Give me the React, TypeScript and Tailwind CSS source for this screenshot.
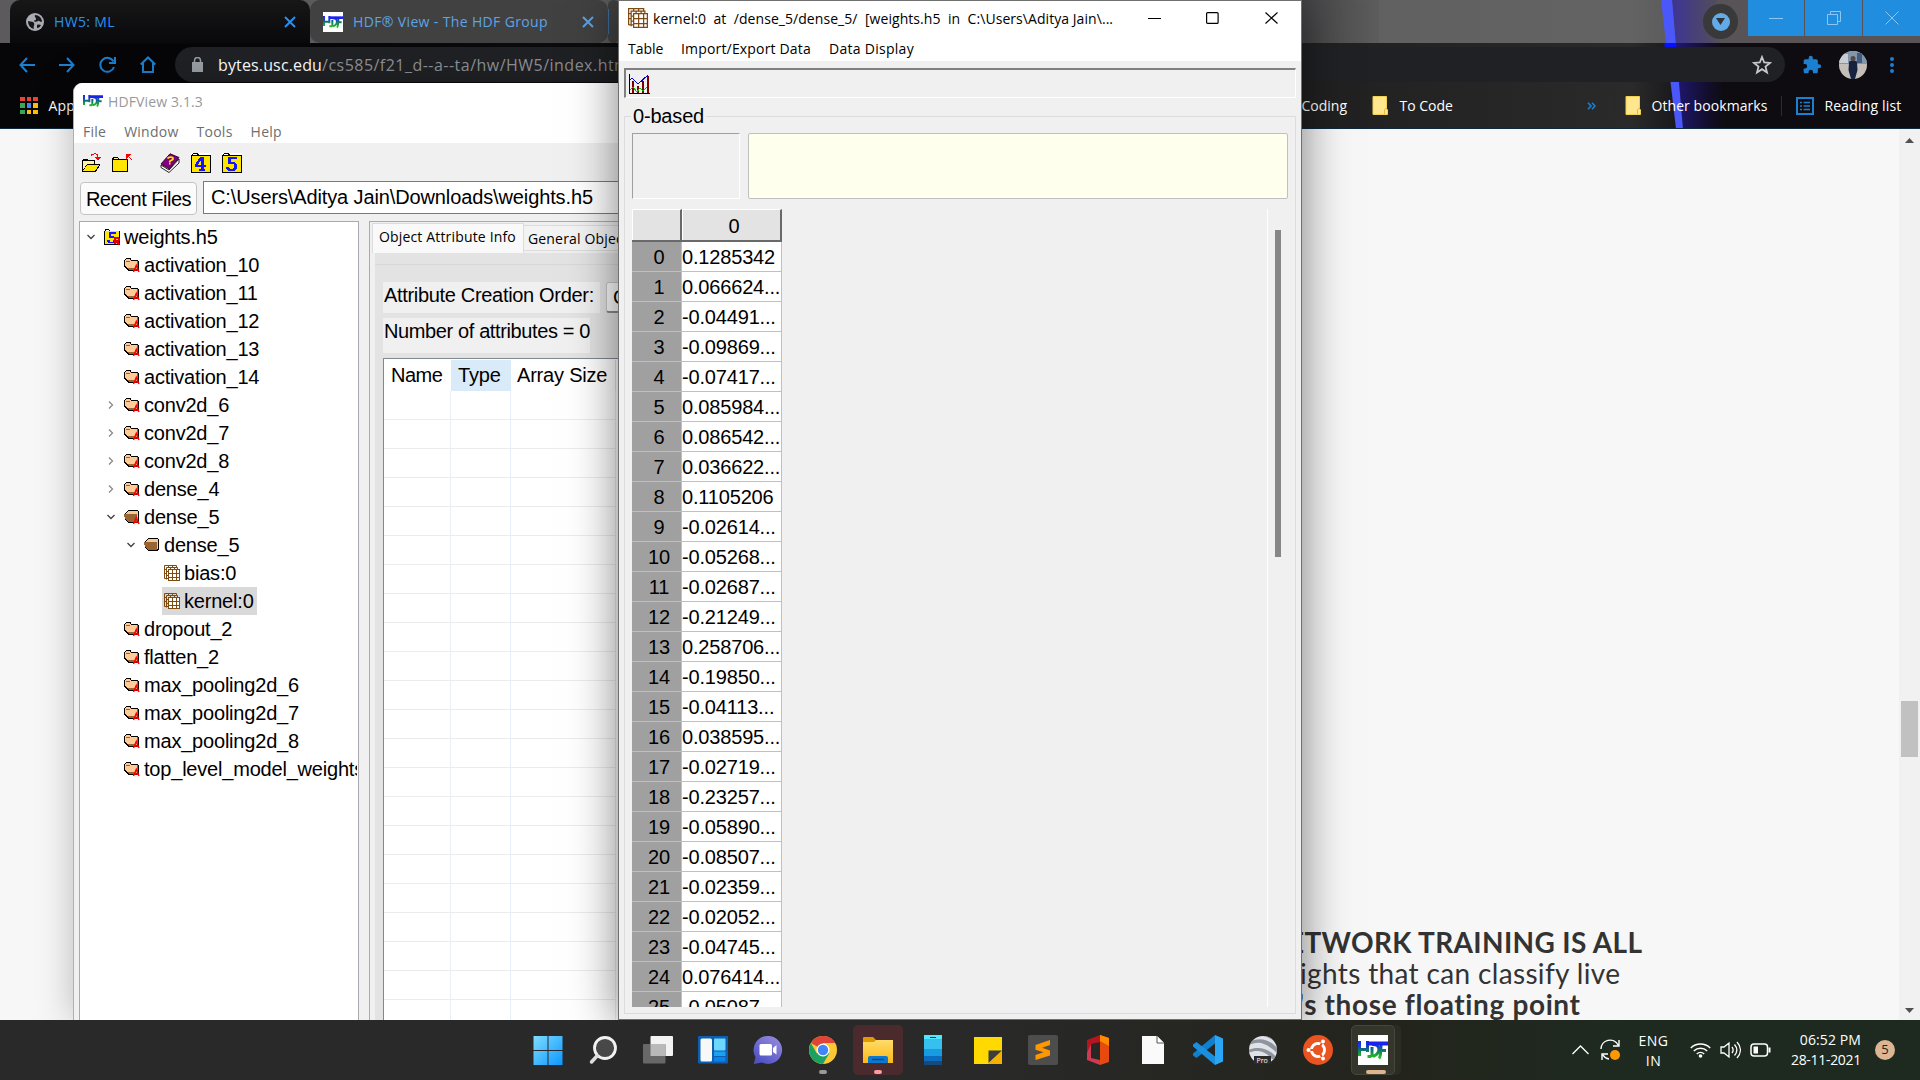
import type { ReactNode } from "react";

const tableRows = [
  "0.1285342", "0.066624...", "-0.04491...", "-0.09869...", "-0.07417...", "0.085984...", "0.086542...",
  "0.036622...", "0.1105206", "-0.02614...", "-0.05268...", "-0.02687...", "-0.21249...", "0.258706...",
  "-0.19850...", "-0.04113...", "0.038595...", "-0.02719...", "-0.23257...", "-0.05890...", "-0.08507...",
  "-0.02359...", "-0.02052...", "-0.04745...", "0.076414...", "-0.05087...",
];

type TreeKind = "file" | "closed" | "openA" | "open" | "data";
type TreeItem = { label: string; kind: TreeKind; level: number; arrow?: "open" | "shut"; selected?: boolean };

const tree: TreeItem[] = [
  { label: "weights.h5", kind: "file", level: 0, arrow: "open" },
  { label: "activation_10", kind: "closed", level: 1 },
  { label: "activation_11", kind: "closed", level: 1 },
  { label: "activation_12", kind: "closed", level: 1 },
  { label: "activation_13", kind: "closed", level: 1 },
  { label: "activation_14", kind: "closed", level: 1 },
  { label: "conv2d_6", kind: "closed", level: 1, arrow: "shut" },
  { label: "conv2d_7", kind: "closed", level: 1, arrow: "shut" },
  { label: "conv2d_8", kind: "closed", level: 1, arrow: "shut" },
  { label: "dense_4", kind: "closed", level: 1, arrow: "shut" },
  { label: "dense_5", kind: "openA", level: 1, arrow: "open" },
  { label: "dense_5", kind: "open", level: 2, arrow: "open" },
  { label: "bias:0", kind: "data", level: 3 },
  { label: "kernel:0", kind: "data", level: 3, selected: true },
  { label: "dropout_2", kind: "closed", level: 1 },
  { label: "flatten_2", kind: "closed", level: 1 },
  { label: "max_pooling2d_6", kind: "closed", level: 1 },
  { label: "max_pooling2d_7", kind: "closed", level: 1 },
  { label: "max_pooling2d_8", kind: "closed", level: 1 },
  { label: "top_level_model_weights", kind: "closed", level: 1 },
];

const indents = ["pl-[2px]", "pl-[22px]", "pl-[42px]", "pl-[62px]"];

/* ---------- icons ---------- */

function HdfLogo({ size }: { size: number }) {
  return (
    <svg width={size} height={size} viewBox="0 0 30 30" className="shrink-0">
      <defs>
        <linearGradient id="hdfg" gradientUnits="userSpaceOnUse" x1="0" y1="6" x2="0" y2="24">
          <stop offset="0" stopColor="#1a22ff" />
          <stop offset="0.3" stopColor="#1544c0" />
          <stop offset="0.6" stopColor="#128a50" />
          <stop offset="1" stopColor="#2ec81e" />
        </linearGradient>
      </defs>
      <rect width="30" height="30" fill="#fff" />
      <g stroke="url(#hdfg)" fill="none" strokeWidth="3">
        <path d="M1.500 6v15M1.500 14.500h8M9.500 6v11" />
        <path d="M9.500 21.500h4M14 12v10M14 9.500c9-1 9 9 1 12" />
        <path d="M21 23.500c2-2 2-9 2-14M22 15.500h6" />
      </g>
      <path d="M9 6.500h21v4H9z" fill="#1a22ee" />
    </svg>
  );
}

function FolderClosed({ open, mark }: { open?: boolean; mark?: boolean }) {
  return (
    <svg width="16" height="16" viewBox="0 0 16 16" className="shrink-0">
      {open ? (
        <g shapeRendering="crispEdges">
          <path d="M2 3 4 1h9l2 1v10l-2 2H4L1 11V5z" fill="#000" />
          <path d="M2 4 4 2h10v3H1z" fill="#f5c999" />
          <path d="M0 5h13v7l-1 1H4L1 10z" fill="#996633" />
          <path d="M13 4h1v8h-1z" fill="#f5c999" />
        </g>
      ) : (
        <g shapeRendering="crispEdges">
          <path d="M1 2 2 1h4l1 1v1h6l2 2v7l-2 2H5L2 12 0 9V4z" fill="#000" />
          <path d="M1 4 2 2h4l1 2h6v8H5L1 9z" fill="#ffcc99" />
          <path d="M13 4h1v8h-1zM4 11h8v2H5z" fill="#996633" />
          <path d="M2 4h4v1H2z" fill="#996633" />
        </g>
      )}
      {mark && <path d="M9.500 15 12.300 8.500 15 15M10.500 13h3.500" fill="none" stroke="#f00" strokeWidth="1.500" />}
    </svg>
  );
}

function GridStack({ size }: { size: number }) {
  return (
    <svg width={size} height={size} viewBox="0 0 16 16" className="shrink-0" fill="none" stroke="#7d4a12" strokeWidth="1">
      <path d="M.5 13.500V.5h12v2M.5 4.500h2M.5 8.500h2M4.500.5v2M8.500.5v2M.5 13.500h4" />
      <path d="M2.500 14.500v-12h11v2M2.500 6.500h2M2.500 10.500h2M6.500 2.500v2M10.500 2.500v2" />
      <rect x="4.500" y="4.500" width="11" height="11" fill="#fff" />
      <path d="M4.500 8.500h11M4.500 12.500h11M8.500 4.500v11M12.500 4.500v11" />
    </svg>
  );
}

function NumberFolder({ digit, size, mark }: { digit: "4" | "5"; size: number; mark?: boolean }) {
  return (
    <svg width={size} height={size} viewBox="0 0 20 20" className="shrink-0" shapeRendering="crispEdges">
      <path d="M0 0h20v20H0z" fill="#fff" />
      <path d="M1 3V1l1-1h4l2 2h12v18H0V2z" fill="#000" />
      <path d="M2 1h4v1H2zM8 0h12v2H8z" fill="#fff" />
      <path d="M1 3h18v16H1z" fill="#ffe600" />
      {digit === "4" ? (
        <path d="M9 4h4v8h2v2h-2v2h1v2H8v-2h2v-2H4v-2l3-5zM10 7l-3 5h3z" fill="#1414ff" fillRule="evenodd" />
      ) : (
        <path d="M6 4h9v2H9v3h3l3 2v4l-3 3H7l-3-2v-2h3l1 2h3l1-2v-2l-1-1H6z" fill="#1414ff" />
      )}
      {mark && <path d="M14 19v-8h4l1 2-1 2h-3l4 4" fill="none" stroke="#e00000" strokeWidth="2" />}
    </svg>
  );
}

function TreeArrow({ kind }: { kind?: "open" | "shut" }) {
  return (
    <span className="flex w-[17px] shrink-0 justify-center">
      {kind === "open" && (
        <svg width="8" height="6" viewBox="0 0 8 6" fill="none" stroke="#404040" strokeWidth="1.300"><path d="m.5 1 3.500 3.500L7.500 1" /></svg>
      )}
      {kind === "shut" && (
        <svg width="6" height="8" viewBox="0 0 6 8" fill="none" stroke="#8a8a8a" strokeWidth="1.300"><path d="m1 .5 3.500 3.500L1 7.500" /></svg>
      )}
    </span>
  );
}

function YellowFolder() {
  return (
    <svg width="16" height="19" viewBox="0 0 16 19" className="shrink-0">
      <path d="M1 .5h13.500v12l1 1.500v4.500H1z" fill="#ffe68f" stroke="#f3d04e" />
      <path d="M12.500 18v-4l1-1.500h1" fill="none" stroke="#e8b93a" />
    </svg>
  );
}

/* ---------- browser ---------- */

function Tab({ active, icon, children }: { active?: boolean; icon: ReactNode; children: ReactNode }) {
  return (
    <div
      className={
        active
          ? "flex h-full w-[300px] items-center rounded-t-[10px] bg-[#0a090b] bg-linear-to-b from-[#171718] to-[#09080a] pr-[14px] pl-[16px] text-[#2790f5]"
          : "flex h-full w-[298px] items-center rounded-[10px] bg-[#414141] pr-[14px] pl-[13px] text-[#5ea3e4]"
      }
    >
      {icon}
      <span className="ml-[10px] flex-1 pb-px text-[14px] tracking-[0.36px] whitespace-nowrap">{children}</span>
      <svg width="12" height="12" viewBox="0 0 12 12" fill="none" stroke="currentColor" strokeWidth="2"><path d="m1 1 10 10M11 1 1 11" /></svg>
    </div>
  );
}

function Browser() {
  return (
    <div className="flex h-[1020px] flex-col bg-[#f7f7f7]">
      <header className="relative flex h-[129px] shrink-0 flex-col overflow-hidden border-b border-[#0b2a40] bg-linear-to-r from-[#060507] from-15% via-[#2a2a2a] via-85% to-[#0e0c10] to-89%">
        <div className="flex h-[43px] shrink-0 justify-between bg-linear-to-r from-[#5c5a5c] from-30% via-[#636363] via-85% to-[#575357] to-89%">
          <div className="flex pl-[10px]">
            <Tab
              active
              icon={
                <svg width="18" height="18" viewBox="0 0 18 18">
                  <circle cx="9" cy="9" r="9" fill="#a9adb3" />
                  <path d="M2 8c3 1 5 0 6 2s-1 3 0 6c-4-1-6-4-6-8zM9 2c-1 2 1 2 1 4s-2 1-2 2 3 1 4 0 2 1 4 1c0-4-3-7-7-7zM11 12c2-1 3 0 4 0-1 2-2 3-4 3z" fill="#17171a" />
                </svg>
              }
            >
              HW5: ML
            </Tab>
            <Tab icon={<HdfLogo size={20} />}>HDF® View - The HDF Group</Tab>
            <div className="h-full w-[11px] rounded-[8px] bg-[#414141] py-[9px]"><div className="h-full w-px bg-[#3d6d9c]" /></div>
            <div className="h-full w-[760px] bg-linear-to-r from-[#454547] from-90% to-[#5d5d5d]" />
          </div>
        </div>
        <svg className="absolute top-0 left-[1600px]" width="160" height="129" viewBox="0 0 160 129">
          <defs>
            <linearGradient id="glow" x1="0" x2="1">
              <stop offset="0" stopColor="#2414c8" stopOpacity=".55" />
              <stop offset="1" stopColor="#2414a0" stopOpacity="0" />
            </linearGradient>
          </defs>
          <path d="M72 0h45l8 129H83z" fill="url(#glow)" />
          <path d="M61 0h11l11 129h-7z" fill="#4a57fa" />
          <path d="M64 43h12l.5 5H65z" fill="#0612ff" />
        </svg>
        <div className="absolute top-0 right-0 flex items-start text-[#8cc6f5]">
          <div className="mt-[4px] mr-[10px] flex size-[35px] items-center justify-center rounded-full bg-[#393939]">
            <div className="flex size-[18px] items-center justify-center rounded-full bg-[#62abe8]">
              <svg width="9" height="7" viewBox="0 0 9 7"><path d="M0 0h9L4.500 7z" fill="#333" /></svg>
            </div>
          </div>
          <div className="flex h-[36px] gap-px">
            <div className="flex w-[56px] items-center justify-center bg-[#208ddf]">
              <svg width="14" height="14" stroke="currentColor"><path d="M0 7.500h14" /></svg>
            </div>
            <div className="flex w-[57px] items-center justify-center bg-[#208ddf]">
              <svg width="14" height="14" fill="none" stroke="currentColor"><path d="M.5 3.500h10v10H.5zM3.500 3V.5h10v10H11" /></svg>
            </div>
            <div className="flex w-[57px] items-center justify-center bg-[#208ddf]">
              <svg width="14" height="14" fill="none" stroke="currentColor"><path d="m.5.5 13 13M13.500.5l-13 13" /></svg>
            </div>
          </div>
        </div>
        <div className="relative flex h-[43px] shrink-0 items-center pl-[19px] text-[#1b80d0]">
          <div className="flex w-[155px] items-center gap-[24px]">
            <svg width="16" height="16" viewBox="0 0 16 16" fill="none" stroke="currentColor" strokeWidth="2"><path d="M16 8H2M8 1 1.500 8 8 15" /></svg>
            <svg width="16" height="16" viewBox="0 0 16 16" fill="none" stroke="currentColor" strokeWidth="2"><path d="M0 8h14M8 1l6.500 7L8 15" /></svg>
            <svg width="17" height="17" viewBox="0 0 17 17" fill="none" stroke="currentColor" strokeWidth="2"><path d="M15 11a7 7 0 1 1-.5-5.500M16 1v6h-6" /></svg>
            <svg width="16" height="17" viewBox="0 0 16 17" fill="none" stroke="currentColor" strokeWidth="2"><path d="M3 7v9h10V7M.7 8.500 8 1.500l7.300 7" /></svg>
          </div>
          <div className="ml-px flex h-[35px] w-[1610px] items-center rounded-full bg-[#202124] pr-[13px] pl-[17px]">
            <svg width="11" height="15" viewBox="0 0 11 15"><path d="M0 5h11v10H0z" fill="#9aa0a6" /><path d="M2.500 5V3.500a3 3 0 0 1 6 0V5" fill="none" stroke="#9aa0a6" strokeWidth="1.500" /></svg>
            <div className="ml-[15px] flex-1 pt-px text-[16px] whitespace-nowrap">
              <span className="tracking-[0.14px] text-white">bytes.usc.edu</span>
              <span className="tracking-[0.48px] text-[#8e9196]">/cs585/f21_d--a--ta/hw/HW5/index.html</span>
            </div>
            <svg width="20" height="20" viewBox="0 0 20 20" fill="none" stroke="#c6c8ca" strokeWidth="1.800"><path d="m10 2 2.200 5.500 5.800.4-4.500 3.700 1.500 5.900-5-3.300-5 3.300 1.500-5.900L2 7.900l5.800-.4z" /></svg>
          </div>
          <svg className="ml-[17px]" width="20" height="20" viewBox="0 0 24 24" fill="#1b80d0"><path d="M20.500 11H19V7c0-1.100-.9-2-2-2h-4V3.500a2.500 2.500 0 0 0-5 0V5H4c-1.100 0-2 .9-2 2v3.800h1.500a2.700 2.700 0 0 1 0 5.400H2V20c0 1.100.9 2 2 2h3.800v-1.500a2.700 2.700 0 0 1 5.400 0V22H17c1.100 0 2-.9 2-2v-4h1.500a2.500 2.500 0 0 0 0-5z" /></svg>
          <svg className="ml-[17px]" width="28" height="28" viewBox="0 0 28 28">
            <defs><clipPath id="av"><circle cx="14" cy="14" r="14" /></clipPath></defs>
            <g clipPath="url(#av)">
              <rect width="28" height="28" fill="#c3bfb8" />
              <rect width="28" height="13" fill="#7f96ad" />
              <path d="M0 3h9v9H0z" fill="#c9ccd0" /><path d="M18 2h5v10h-5z" fill="#3f5c80" />
              <path d="M10 11c1-2 7-2 8 0l.5 8-2.500 9h-4l-2.500-9z" fill="#152341" />
              <circle cx="14" cy="7.500" r="2.500" fill="#5b4640" />
            </g>
          </svg>
          <svg className="ml-[23px]" width="4" height="18" viewBox="0 0 4 18" fill="#1b80d0"><circle cx="2" cy="3" r="2" /><circle cx="2" cy="9" r="2" /><circle cx="2" cy="15" r="2" /></svg>
        </div>
        <div className="relative flex flex-1 items-center pb-[3px] pl-[20px] text-[14px] text-white">
          <div className="mr-[11px] grid grid-cols-3 gap-[2px]">
            {["bg-[#ea4335]", "bg-[#ea4335]", "bg-[#ea4335]", "bg-[#34a853]", "bg-[#4285f4]", "bg-[#fbbc05]", "bg-[#34a853]", "bg-[#fbbc05]", "bg-[#fbbc05]"].map((c, i) => (
              <i key={i} className={`size-[4.500px] ${c}`} />
            ))}
          </div>
          <span className="w-[1253px] tracking-[0.2px]">Apps</span>
          <span className="w-[70px]">Coding</span>
          <YellowFolder />
          <span className="ml-[12px] w-[187px]">To Code</span>
          <svg width="9" height="8" viewBox="0 0 9 8" fill="none" stroke="#1b80d0" strokeWidth="1.600"><path d="m1 .8 3 3.200-3 3.200M5 .8 8 4 5 7.200" /></svg>
          <i className="ml-[13px] h-[20px] w-px bg-[#14324d]" />
          <span className="ml-[15px]"><YellowFolder /></span>
          <span className="ml-[11px] w-[129px] tracking-[0.07px]">Other bookmarks</span>
          <i className="h-[20px] w-px bg-[#14324d]" />
          <svg className="ml-[14px]" width="18" height="18" viewBox="0 0 18 18" fill="none" stroke="#1b80d0"><rect x="1" y="1" width="16" height="16" strokeWidth="2" /><path d="M4 5.500h2M4 9h2M4 12.500h2M7.500 5.500H14M7.500 9H14M7.500 12.500H14" strokeWidth="1.500" /></svg>
          <span className="ml-[11px] tracking-[0.17px]">Reading list</span>
        </div>
      </header>
      <div className="flex flex-1 justify-end">
        <main className="flex w-[598px] flex-col justify-end overflow-hidden font-[Lato] text-[28px] leading-[31px] whitespace-nowrap text-[#333]">
          <p className="-ml-[13px] font-bold tracking-[0.34px]">ETWORK TRAINING IS ALL</p>
          <p className="-ml-[1px] tracking-[0.35px]">ights that can classify live</p>
          <p className="-ml-[3px] font-bold tracking-[0.63px]">'s those floating point</p>
        </main>
        <aside className="flex w-[21px] flex-col items-center bg-[#f1f1f1] pt-[9px] pb-[7px]">
          <svg width="9" height="5"><path d="M0 5h9L4.500 0z" fill="#505050" /></svg>
          <div className="mt-[558px] h-[56px] w-[17px] bg-[#c1c1c1]" />
          <svg className="mt-auto" width="9" height="5"><path d="M0 0h9L4.500 5z" fill="#505050" /></svg>
        </aside>
      </div>
    </div>
  );
}

/* ---------- HDFView main window ---------- */

function HdfViewWindow() {
  return (
    <section className="absolute top-[83px] left-[73px] flex h-[937px] w-[700px] flex-col overflow-hidden rounded-tl-[9px] border-l border-[#b0b0b0] bg-[#f0f0f0] shadow-[0_0_36px_rgba(0,0,0,0.25)]">
      <div className="flex h-[60px] shrink-0 flex-col bg-white text-[14px]">
        <div className="flex h-[38px] items-center pl-[9px] tracking-[0.13px] text-[#999]">
          <HdfLogo size={20} />
          <span className="ml-[5px]">HDFView 3.1.3</span>
        </div>
        <div className="flex h-[25px] items-center gap-[18px] pl-[9px] tracking-[0.25px] text-[#6e6e6e]">
          <span>File</span><span>Window</span><span>Tools</span><span>Help</span>
        </div>
      </div>
      <div className="flex h-[38px] shrink-0 items-center pt-px pl-[7px]">
        <svg width="21" height="20" viewBox="0 0 21 20" shapeRendering="crispEdges">
          <path d="M1 18V7l1-1h4l1 1h7v4h5v1l-4 7H1z" fill="#000" />
          <path d="M2 17V8h11v3H6z" fill="#fff3a0" /><path d="M2 18l4-6h12l-4 6z" fill="#ffe600" />
          <path d="M10 3c1-3 7-3 7 1v2" fill="none" stroke="#f00" /><path d="M14 4h6l-3 4z" fill="#f00" />
        </svg>
        <svg className="ml-[10px]" width="20" height="20" viewBox="0 0 20 20" shapeRendering="crispEdges">
          <path d="M0 19V6l1-2h5l1 2h9v13z" fill="#000" /><path d="M1 7h14v11H1z" fill="#ffe600" /><path d="M2 5h4v1H2z" fill="#fff3a0" />
          <path d="M14 1h5l-1 1-1 1 3 4h-1l-3-3-2 2z" fill="#f00" />
        </svg>
        <svg className="ml-[28px]" width="20" height="20" viewBox="0 0 20 20">
          <path d="m1 12 8 5 10-11v4L9 19.500 1 14.500z" fill="#fff" stroke="#222" />
          <path d="M10 .8 19 4.500 9.500 16 1 11z" fill="#800080" stroke="#3a003a" />
          <path d="M7.500 5.500c1-2 6-2 5.500.5-.3 1.500-3 1-3.500 3M9 10.500h1.500" fill="none" stroke="#ffe600" strokeWidth="1.800" />
        </svg>
        <span className="ml-[11px]"><NumberFolder digit="4" size={20} /></span>
        <span className="ml-[11px]"><NumberFolder digit="5" size={20} /></span>
      </div>
      <div className="flex h-[33px] shrink-0 pl-[6px] font-['Liberation_Sans'] text-[20px] text-black">
        <div className="mt-px flex h-[33px] w-[117px] items-center justify-center rounded-[4px] border border-[#c3c3c3] bg-[#fbfbfb] tracking-[-0.5px]">Recent Files</div>
        <div className="ml-[6px] flex flex-1 items-center border border-[#7a7a7a] bg-white pb-[2px] pl-[7px] tracking-[-0.12px] whitespace-nowrap">C:\Users\Aditya Jain\Downloads\weights.h5</div>
      </div>
      <div className="mt-[7px] flex flex-1 pl-[5px]">
        <div className="w-[280px] overflow-hidden border border-b-0 border-[#a9a9b0] bg-white pt-[1px] pr-px font-['Liberation_Sans'] text-[20px] tracking-[-0.2px] text-black">
          <div className="overflow-hidden">
            {tree.map((t, i) => (
              <div key={i} className={`flex h-[28px] items-center ${indents[t.level]} whitespace-nowrap`}>
                <TreeArrow kind={t.arrow} />
                <div className={t.selected ? "ml-[3px] flex h-full items-center bg-[#d9d9d9] pr-[3px] pl-[2px]" : "ml-[3px] flex items-center pl-[2px]"}>
                  {t.kind === "file" && <NumberFolder digit="5" size={16} mark />}
                  {t.kind === "closed" && <FolderClosed mark />}
                  {t.kind === "openA" && <FolderClosed open mark />}
                  {t.kind === "open" && <FolderClosed open />}
                  {t.kind === "data" && <GridStack size={16} />}
                  <span className="ml-[4px]">{t.label}</span>
                </div>
              </div>
            ))}
          </div>
        </div>
        <div className="ml-[10px] flex flex-1 flex-col border-t border-l border-[#a9a9b0] pt-px pl-[2px]">
          <div className="flex h-[30px] shrink-0 items-end text-[14px] tracking-[0.16px] whitespace-nowrap text-black">
            <div className="flex h-[30px] w-[152px] items-center border-x border-t border-[#dcdcdc] bg-[#f9f9f9] pb-[4px] pl-[6px]">Object Attribute Info</div>
            <div className="mb-[2px] flex h-[26px] flex-1 items-center border border-l-0 border-[#dcdcdc] bg-[#f3f3f3] pl-[4px]">General Object Info</div>
          </div>
          <div className="ml-[3px] flex flex-1 flex-col bg-[#e3e3e3] font-['Liberation_Sans'] text-[20px] text-black">
            <div className="h-[12px] border-b border-[#d8d8d8]" />
            <div className="mt-[17px] flex pl-[8px]">
              <div className="h-[31px] w-[217px] bg-[#f0f0f0] pl-px leading-[27px] tracking-[-0.32px]">Attribute Creation Order:</div>
              <div className="ml-[6px] h-[31px] w-[150px] rounded-[3px] border border-b-2 border-[#c8c8c8] border-b-[#8a8a8a] bg-[#fdfdfd] pl-[6px] leading-[28px] whitespace-nowrap">Creation Order</div>
            </div>
            <div className="mt-[5px] ml-[8px] h-[35px] w-[207px] bg-[#f0f0f0] pl-px leading-[26px] tracking-[-0.38px] whitespace-nowrap">Number of attributes = 0</div>
            <div className="mt-[5px] ml-[8px] flex flex-1 flex-col overflow-hidden border-t border-l border-[#828790] bg-white pt-px">
              <div className="flex h-[31px] shrink-0 leading-[31px] tracking-[-0.2px]">
                <div className="w-[67px] pl-[7px] tracking-[-0.5px]">Name</div>
                <div className="w-[60px] bg-[#d9ebf9] pl-[7px]">Type</div>
                <div className="w-[105px] border-r border-[#e0e0e0] pl-[6px]">Array Size</div>
              </div>
              <div className="flex flex-1">
                <div className="w-[67px] border-r border-[#e8eff8] bg-[repeating-linear-gradient(to_bottom,transparent_0px,transparent_28px,#ececec_28px,#ececec_29px)]" />
                <div className="w-[60px] border-r border-[#e8eff8] bg-[repeating-linear-gradient(to_bottom,transparent_0px,transparent_28px,#ececec_28px,#ececec_29px)]" />
                <div className="w-[105px] border-r border-[#e8eff8] bg-[repeating-linear-gradient(to_bottom,transparent_0px,transparent_28px,#ececec_28px,#ececec_29px)]" />
              </div>
            </div>
          </div>
        </div>
      </div>
    </section>
  );
}

/* ---------- dataset window ---------- */

function DatasetWindow() {
  return (
    <section className="absolute top-0 left-[618px] flex h-[1020px] w-[684px] flex-col border border-[#707070] bg-[#f0f0f0] shadow-[0_4px_44px_rgba(0,0,0,0.5)]">
      <div className="flex h-[60px] shrink-0 flex-col bg-white text-[14px] text-black">
        <div className="flex h-[37px] items-center pl-[9px]">
          <GridStack size={20} />
          <span className="ml-[5px] w-[495px] pt-px whitespace-pre tracking-[0.06px]">kernel:0  at  /dense_5/dense_5/  [weights.h5  in  C:\Users\Aditya Jain\...</span>
          <svg width="13" height="12" stroke="#000"><path d="M0 6.500h13" /></svg>
          <svg className="ml-[45px]" width="13" height="12" fill="none" stroke="#000" strokeWidth="1.200"><rect x=".6" y=".6" width="11.500" height="10.800" rx="1" /></svg>
          <svg className="ml-[46px]" width="13" height="12" fill="none" stroke="#000" strokeWidth="1.200"><path d="m.5.5 12 11M12.500.5l-12 11" /></svg>
        </div>
        <div className="mt-px flex h-[26px] items-center pl-[9px] tracking-[0.17px]">
          <span className="w-[53px] tracking-[0px]">Table</span><span className="w-[148px]">Import/Export Data</span><span className="tracking-[0.28px]">Data Display</span>
        </div>
      </div>
      <div className="mx-[5px] mt-[7px] flex h-[30px] shrink-0 items-center border-t-2 border-r border-b border-l-2 border-t-[#808080] border-r-white border-b-white border-l-[#808080] pl-[3px]">
        <svg width="21" height="20" viewBox="0 0 21 20" shapeRendering="crispEdges">
          <path d="M0 0h1v19h20v1H0z" fill="#000" />
          <path d="M3 7h2v12H3zM8 12h2v7H8zM13 7h2v12h-2zM18 2h2v17h-2z" fill="#800000" />
          <path d="M1 6l2-2 6 6L19 1" fill="none" stroke="#0000e0" />
          <path d="M1 16l3-3 4 5 3-4 3 3 4-4" fill="none" stroke="#00c000" />
        </svg>
      </div>
      <fieldset className="mx-[5px] mt-[8px] mb-[5px] flex min-h-0 flex-1 flex-col border border-[#dcdcdc] pl-[7px]">
        <legend className="ml-[-1px] h-[20px] px-[2px] font-['Liberation_Sans'] text-[20px] leading-[20px] tracking-[-0.18px] text-black">0-based</legend>
        <div className="mt-[7px] flex h-[66px]">
          <div className="w-[108px] border border-[#a0a0a0] border-r-white border-b-white" />
          <div className="ml-[8px] w-[540px] rounded-[2px] border border-[#c0c0c0] bg-[#ffffee]" />
        </div>
        <div className="mt-[10px] flex h-[798px] overflow-hidden font-['Liberation_Sans'] text-[20px] tracking-[-0.17px] text-black">
          <div className="w-[150px] shrink-0 overflow-hidden">
            <div className="flex h-[33px] border-b-2 border-[#696969] leading-[32px]">
              <div className="w-[50px] border-t border-r-2 border-l border-t-white border-r-[#696969] border-l-white bg-[#e3e3e3]" />
              <div className="w-[100px] border-t border-r-2 border-l border-t-white border-r-[#696969] border-l-white bg-[#e3e3e3] pl-[5px] text-center">0</div>
            </div>
            {tableRows.map((v, i) => (
              <div key={i} className="flex h-[30px] border-b border-[#c0c0c0] leading-[31px]">
                <div className="h-[29px] w-[50px] border-r border-[#c0c0c0] bg-[#a0a0a0] pl-[5px] text-center">{i}</div>
                <div className="h-[29px] w-[100px] border-r border-[#c0c0c0] bg-white whitespace-nowrap">{v}</div>
              </div>
            ))}
          </div>
          <div className="ml-[485px] w-px bg-white" />
          <div className="mt-[21px] ml-[7px] h-[327px] w-[6px] bg-[#868686]" />
        </div>
      </fieldset>
    </section>
  );
}

/* ---------- taskbar ---------- */

function AppSlot({ children }: { children: ReactNode }) {
  return <div className="flex w-[55.070px] justify-center">{children}</div>;
}

function Taskbar() {
  return (
    <footer className="relative flex h-[60px] items-center bg-linear-to-r from-[#292929] from-50% via-[#23241c] via-72% to-[#1e2a20] to-85% pl-[520px] font-['Open_Sans'] text-[14px] text-white">
      <AppSlot>
        <svg width="30" height="30" viewBox="0 0 30 30">
          <defs><linearGradient id="win" x1="0" y1="0" x2="1" y2="1"><stop offset="0" stopColor="#7fdcff" /><stop offset="1" stopColor="#0c97ff" /></linearGradient></defs>
          <path d="M.5 1h14v14H.5zM15.500 1h14v14h-14zM.5 16h14v14H.5zM15.500 16h14v14h-14z" fill="url(#win)" />
        </svg>
      </AppSlot>
      <AppSlot>
        <svg width="28" height="30" viewBox="0 0 28 30" fill="none">
          <circle cx="16" cy="13" r="10.500" fill="#484848" stroke="#f2f2f2" strokeWidth="2.800" />
          <path d="M8 21 2.500 27" stroke="#ddd" strokeWidth="3.500" strokeLinecap="round" />
        </svg>
      </AppSlot>
      <AppSlot>
        <svg width="30" height="30" viewBox="0 0 30 30">
          <rect x="7.500" y="1" width="22.500" height="20" rx="1" fill="#f3f3f3" />
          <rect x="0" y="9" width="22.500" height="19.500" rx="1" fill="#686868" />
          <path d="M7.500 9h15v12h-15z" fill="#b9b9b9" />
        </svg>
      </AppSlot>
      <AppSlot>
        <svg width="30" height="30" viewBox="0 0 30 30">
          <rect y="1" width="30" height="27.500" rx="1" fill="#0f5fb0" />
          <rect x="2.500" y="3.500" width="11.500" height="23" rx="1.500" fill="#f8f8f8" />
          <rect x="16" y="3.500" width="11.500" height="12" rx="1" fill="#6cd8ff" />
          <rect x="16" y="16.500" width="11.500" height="4.500" fill="#1ba0f5" /><rect x="16" y="22" width="11.500" height="4.500" rx="1" fill="#0a84ea" />
        </svg>
      </AppSlot>
      <AppSlot>
        <svg width="30" height="30" viewBox="0 0 30 30">
          <defs><linearGradient id="chat" x1="1" y1="0" x2=".3" y2="1"><stop offset="0" stopColor="#9b8ee0" /><stop offset="1" stopColor="#4f52c4" /></linearGradient></defs>
          <path d="M15 1a14 14 0 1 1-6 26.600L.8 29l1.700-7A14 14 0 0 1 15 1z" fill="url(#chat)" />
          <rect x="6.500" y="9" width="12.500" height="11.500" rx="1.500" fill="#fff" /><path d="m20 13 3.500-3v9.500L20 17z" fill="#fff" />
        </svg>
      </AppSlot>
      <AppSlot>
        <div className="relative flex">
          <svg width="28" height="28" viewBox="0 0 28 28">
            <circle cx="14" cy="14" r="14" fill="#fcc934" />
            <path d="M14 14 1.900 7A14 14 0 0 1 26.200 7H14z" fill="#e04438" />
            <path d="M1.900 7A14 14 0 0 0 14 28l6.200-10.500L14 14 7.800 17.500z" fill="#1da160" />
            <circle cx="14" cy="14" r="6.500" fill="#fff" /><circle cx="14" cy="14" r="5.200" fill="#4285f4" />
          </svg>
          <i className="absolute top-[34px] left-[10px] h-[4px] w-[8px] rounded-full bg-[#999]" />
        </div>
      </AppSlot>
      <AppSlot>
        <div className="relative flex h-[50px] w-[50px] items-center justify-center rounded-[5px] bg-[#4a2a2c]">
          <svg width="30" height="30" viewBox="0 0 30 30">
            <defs><linearGradient id="fold" x1="0" y1="0" x2="0" y2="1"><stop offset="0" stopColor="#ffdc6a" /><stop offset="1" stopColor="#fdb813" /></linearGradient></defs>
            <path d="M0 3a1 1 0 0 1 1-1h9l3 3v4H0z" fill="#e09a00" />
            <path d="M0 7h11l2-2h17v23H0z" fill="url(#fold)" />
            <path d="M5 28v-5a2 2 0 0 1 2-2h16a2 2 0 0 1 2 2v5z" fill="#0d78d0" /><path d="M9 24.500h12" stroke="#0a4a90" strokeWidth="1.500" />
          </svg>
          <i className="absolute bottom-[1px] left-[21px] h-[4px] w-[8px] rounded-full bg-[#ff99a4]" />
        </div>
      </AppSlot>
      <AppSlot>
        <svg width="18" height="30" viewBox="0 0 18 30">
          <path d="M0 0h18v5H0z" fill="#50e6ff" /><path d="M0 4h18v10H0z" fill="#35c0f0" /><path d="M0 14h18v7H0z" fill="#199be2" /><path d="M0 21h18v5H0z" fill="#0b6cbd" /><path d="M0 26h18v4H0z" fill="#144a7c" /><path d="M6 2.500h6" stroke="#135" />
        </svg>
      </AppSlot>
      <AppSlot>
        <svg width="28" height="27" viewBox="0 0 28 27">
          <path d="M0 0h28v15L15 27H0z" fill="#ffd900" /><path d="M28 14v13H14z" fill="#f6b100" /><path d="M14.500 13.500H28L14.500 26z" fill="#3d3d3d" />
        </svg>
      </AppSlot>
      <AppSlot>
        <svg width="30" height="30" viewBox="0 0 30 30">
          <rect width="30" height="30" rx="2" fill="#4d4d4d" />
          <path d="m7.500 10 14.500-5v5l-8 2.700 8 2.800v5L7.500 25v-5l8-2.700-8-2.500z" fill="#ff9800" />
        </svg>
      </AppSlot>
      <AppSlot>
        <svg width="24" height="30" viewBox="0 0 24 30">
          <path d="M14 0 1 5v20l4-3V9l9-2z" fill="#b81420" /><path d="M1 18v7l13 5v-5l-9-2V9z" fill="#d03a50" /><path d="M14 0l9 3v24l-9 3z" fill="#e8490f" /><path d="M14 0l9 3v8l-9-5z" fill="#ff8a00" />
        </svg>
      </AppSlot>
      <AppSlot>
        <svg width="22" height="28" viewBox="0 0 22 28"><path d="M0 0h15l7 7v21H0z" fill="#fafafa" /><path d="M15 0v7h7" fill="#fff" stroke="#555" /></svg>
      </AppSlot>
      <AppSlot>
        <svg width="30" height="30" viewBox="0 0 30 30">
          <path d="M22 0 30 3.500v23L22 30z" fill="#2aa7f4" /><path d="M22 0v8.500L3.500 23 0 20.500v-2z" fill="#0f7fd0" /><path d="M22 30v-8.500L3.500 7 0 9.500v2z" fill="#1a8fe0" />
        </svg>
      </AppSlot>
      <AppSlot>
        <svg width="30" height="30" viewBox="0 0 30 30">
          <defs><clipPath id="earth"><circle cx="15" cy="15" r="14" /></clipPath></defs>
          <g clipPath="url(#earth)">
            <rect width="30" height="30" fill="#dfe2e6" />
            <path d="M0 11c9-6 18-4 30 8v-5C20 2 9 3 0 7zM0 18c9-4 17-2 24 6l6 1C22 12 9 11 0 15zM10 0c8 1 14 3 20 10V4L20 0z" fill="#8d949e" />
          </g>
          <path d="M6 21h17v8H6z" fill="#2b2b2b" /><text x="8.500" y="28" fontSize="7" fill="#fff" fontFamily="Open Sans">Pro</text>
        </svg>
      </AppSlot>
      <AppSlot>
        <svg width="30" height="30" viewBox="0 0 30 30" fill="none">
          <circle cx="15" cy="15" r="15" fill="#e95420" /><circle cx="15" cy="15" r="6.500" stroke="#fff" strokeWidth="3" />
          <path d="M15 15H5M15 15l5-9M15 15l5 9" stroke="#e95420" strokeWidth="2" />
          <circle cx="5.500" cy="15" r="2" fill="#fff" /><circle cx="20" cy="6.500" r="2" fill="#fff" /><circle cx="20" cy="23.500" r="2" fill="#fff" />
          <circle cx="15" cy="15" r="4.800" fill="#e95420" />
        </svg>
      </AppSlot>
      <AppSlot>
        <div className="relative ml-[6px] flex h-[50px] w-[50px] shrink-0 rounded-[5px] bg-[#ffffff0a] pr-[6px]">
          <div className="relative flex h-[50px] w-[44px] shrink-0 items-center justify-center rounded-[5px] border border-[#46473c] bg-[#34352b]">
            <HdfLogo size={30} />
            <i className="absolute bottom-0 left-[14px] h-[4px] w-[20px] rounded-full bg-[#deb48f]" />
          </div>
        </div>
      </AppSlot>
      <div className="ml-auto flex items-center pr-[25px]">
        <svg width="17" height="10" viewBox="0 0 17 10" fill="none" stroke="#fff" strokeWidth="1.300"><path d="m.5 9 8-8 8 8" /></svg>
        <svg className="ml-[11px]" width="21" height="22" viewBox="0 0 21 22" fill="none" stroke="#fff" strokeWidth="1.400">
          <path d="M1 10A9 9 0 0 1 18 6M19 1v6h-6M9 20a8 8 0 0 1-6-4M2 21v-6h6" /><circle cx="15" cy="16" r="5" fill="#ff9800" stroke="none" />
        </svg>
        <div className="ml-[17px] flex w-[31px] flex-col items-center pt-px leading-[20px] tracking-[0.5px]"><span>ENG</span><span>IN</span></div>
        <svg className="ml-[21px]" width="21" height="16" viewBox="0 0 21 16" fill="none" stroke="#fff" strokeWidth="1.500">
          <path d="M.8 6a14 14 0 0 1 19.400 0M3.800 9a9.800 9.800 0 0 1 13.400 0M6.800 12a5.500 5.500 0 0 1 7.400 0" /><circle cx="10.500" cy="14" r="1.800" fill="#fff" stroke="none" />
        </svg>
        <svg className="ml-[9px]" width="21" height="18" viewBox="0 0 21 18" fill="none" stroke="#fff" strokeWidth="1.300">
          <path d="M1 6v6h3l5 4V2L4 6zM12 6c1.500 2 1.500 4 0 6M14.500 3.500c3 3.500 3 7.500 0 11M17 1c4.500 5 4.500 11 0 16" />
        </svg>
        <svg className="ml-[9px]" width="21" height="14" viewBox="0 0 21 14" fill="none" stroke="#fff" strokeWidth="1.500">
          <rect x="1" y="1" width="16.500" height="12" rx="3" /><path d="M19.500 4.500v5" strokeWidth="2" /><path d="M3.500 3.500H8v7H3.500z" fill="#fff" stroke="none" />
        </svg>
        <div className="ml-[19px] flex w-[71px] flex-col items-end leading-[20px] whitespace-nowrap"><span className="tracking-[0.1px]">06:52 PM</span><span className="tracking-[-0.3px]">28-11-2021</span></div>
        <div className="ml-[14px] flex size-[20px] items-center justify-center rounded-full bg-[#dcb593] text-[13px] text-[#222]">5</div>
      </div>
    </footer>
  );
}

export default function App() {
  return (
    <div className="relative h-[1080px] w-[1920px] overflow-hidden bg-black font-['Open_Sans']">
      <div className="relative h-[1020px] overflow-hidden">
        <Browser />
        <HdfViewWindow />
        <DatasetWindow />
      </div>
      <Taskbar />
    </div>
  );
}
